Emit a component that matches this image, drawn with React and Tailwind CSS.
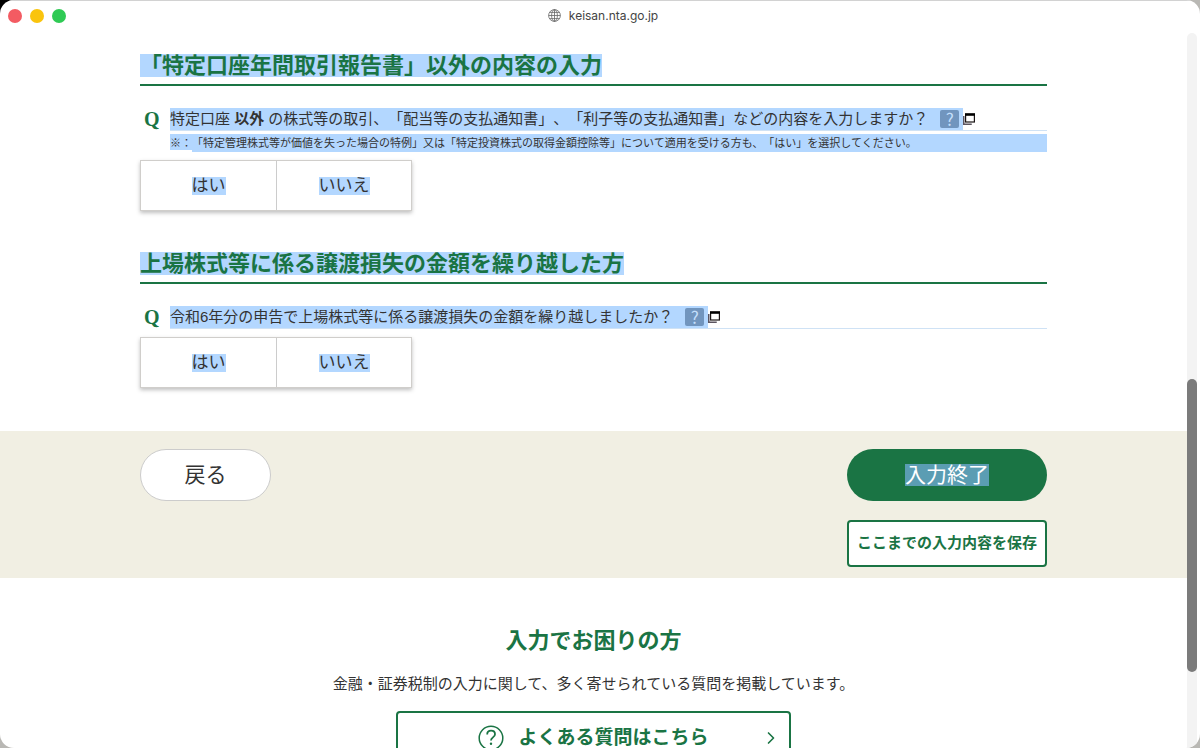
import { ChevronRight } from 'lucide-react';

function GlobeIcon() {
  return (
    <svg className="size-[13px]" viewBox="0 0 13 13" fill="none" stroke="#666" strokeWidth="0.8" aria-hidden="true">
      <circle cx="6.5" cy="6.5" r="5.9" />
      <ellipse cx="6.5" cy="6.5" rx="2.9" ry="5.9" />
      <path d="M6.5 0.6v11.8M0.6 6.5h11.8M1.6 3.4h9.8M1.6 9.6h9.8" />
    </svg>
  );
}

function WindowIcon() {
  return (
    <svg className="size-3" viewBox="0 0 12 12" role="img" aria-label="別ウィンドウで開く">
      <path d="M0.75 3v8.25h8" fill="none" stroke="#5b5560" strokeWidth="1.5" />
      <rect x="2.6" y="1" width="8.8" height="8" fill="#fff" stroke="#1a1414" strokeWidth="1.2" />
      <path d="M2 0.4h10v2.4H2z" fill="#000" />
    </svg>
  );
}

function QuestionIcon() {
  return (
    <svg className="size-[26px]" viewBox="0 0 26 26" fill="none" stroke="#1a7444" aria-hidden="true">
      <circle cx="13" cy="13" r="11.8" strokeWidth="1.5" />
      <path d="M9.2 9.4c0-2.3 1.6-3.7 3.9-3.7s3.9 1.4 3.9 3.5c0 3.2-4 3.2-4 6.2" strokeWidth="1.8" />
      <circle cx="13" cy="18.8" r="1.2" fill="#1a7444" stroke="none" />
    </svg>
  );
}

function TitleBar() {
  return (
    <header className="flex h-[30px] shrink-0 items-center border-t border-[#d2d2d2] pl-2">
      <div className="flex gap-2">
        <button aria-label="閉じる" className="size-[14px] rounded-full bg-[#f35b62]" />
        <button aria-label="しまう" className="size-[14px] rounded-full bg-[#fac40d]" />
        <button aria-label="拡大" className="size-[14px] rounded-full bg-[#2fca54]" />
      </div>
      <div className="flex flex-1 items-center justify-center gap-2 pr-[60px] font-[Inter] text-xs text-[#444]">
        <GlobeIcon />
        <span>keisan.nta.go.jp</span>
      </div>
    </header>
  );
}

function SectionHeading(props) {
  return (
    <h2 className="flex border-b-2 border-[#1a7444] pb-[7px] text-[22px] leading-[23px] font-bold text-[#1a7444]">
      <span className="bg-[#b3d7ff]">{props.children}</span>
    </h2>
  );
}

function Question(props) {
  return (
    <div className="mt-[22px] flex">
      <span className="w-[30px] pl-1 font-['Liberation_Serif'] text-xl leading-[22px] font-bold text-[#1a7444]">
        Q
      </span>
      <div className="flex-1">
        <div className="flex h-[23px] items-center border-b border-[#cfe2f5] text-[15px] leading-[22px]">
          <p id={props.id} className="bg-[#b3d7ff] pr-3 whitespace-pre">
            {props.children}
          </p>
          <a href="#help" className="flex items-center" aria-label="ヘルプ">
            <span className="flex h-[22px] items-center bg-[#b3d7ff] pr-1">
              <span className="h-[18px] w-[19px] rounded-xs bg-[#7195be] text-center font-['Noto_Sans_CJK_JP',sans-serif] text-[17px] leading-[18px] text-[#c3dffc]">
                ?
              </span>
            </span>
            <WindowIcon />
          </a>
        </div>
        {props.note && (
          <p className="mt-[3px] flex text-[11px] leading-[18px]">
            <span className="h-4 bg-[#b3d7ff]">※：</span>
            <span className="flex-1 bg-[#b3d7ff]">{props.note}</span>
          </p>
        )}
      </div>
    </div>
  );
}

function Answers(props) {
  return (
    <div
      role="group"
      aria-labelledby={props.labelledBy}
      className="mt-2 flex w-fit border border-[#d0cecb] bg-white shadow-[0_2px_4px_rgba(0,0,0,0.25)]"
    >
      <button className="h-[49px] w-[135px] text-[17px]">
        <span className="inline-block bg-[#b3d7ff] leading-[18px]">はい</span>
      </button>
      <button className="h-[49px] w-[135px] border-l border-[#ccc] text-[17px]">
        <span className="inline-block bg-[#b3d7ff] leading-[18px]">いいえ</span>
      </button>
    </div>
  );
}

function App() {
  return (
    <div className="h-screen overflow-hidden bg-[radial-gradient(circle_at_top_left,#000_12px,#b9b8b4_40px)] font-['Liberation_Sans','Noto_Sans_CJK_JP',sans-serif] text-[#333] [text-spacing-trim:space-all]">
      <div className="flex h-full flex-col overflow-hidden rounded-[14px] bg-white">
        <TitleBar />

        <div className="flex min-h-0 flex-1">
          <main className="min-w-0 flex-1 overflow-hidden">
            <div className="mx-auto max-w-[907px] pt-6 pb-[43px]">
              <section>
                <SectionHeading>「特定口座年間取引報告書」以外の内容の入力</SectionHeading>
                <Question
                  id="other-input"
                  note="「特定管理株式等が価値を失った場合の特例」又は「特定投資株式の取得金額控除等」について適用を受ける方も、「はい」を選択してください。"
                >
                  特定口座 <b>以外</b> の株式等の取引、「配当等の支払通知書」、「利子等の支払通知書」などの内容を入力しますか？
                </Question>
                <Answers labelledBy="other-input" />
              </section>

              <section className="mt-[41px]">
                <SectionHeading>上場株式等に係る譲渡損失の金額を繰り越した方</SectionHeading>
                <Question id="carry-over">
                  令和6年分の申告で上場株式等に係る譲渡損失の金額を繰り越しましたか？
                </Question>
                <Answers labelledBy="carry-over" />
              </section>
            </div>

            <div className="bg-[#f1efe3] pt-[18px] pb-[11px]">
              <div className="mx-auto flex max-w-[907px] items-start justify-between">
                <button className="h-[52px] w-[131px] rounded-full border border-[#ccc] bg-white text-[21px]">
                  戻る
                </button>
                <div className="flex w-[200px] flex-col gap-[19px]">
                  <button className="h-[52px] rounded-full bg-[#1a7444] text-[21px] text-white">
                    <span className="inline-block bg-[#5b9db3] leading-[22px]">入力終了</span>
                  </button>
                  <button className="h-[47px] rounded-sm border-2 border-[#1a7444] bg-white text-[15px] font-bold text-[#1a7444]">
                    ここまでの入力内容を保存
                  </button>
                </div>
              </div>
            </div>

            <section className="flex flex-col items-center pt-[51px]">
              <h2 className="text-[22px] leading-[23px] font-bold text-[#1a7444]">入力でお困りの方</h2>
              <p className="mt-[21px] text-[15px] leading-[22px]">
                金融・証券税制の入力に関して、多く寄せられている質問を掲載しています。
              </p>
              <a
                href="#faq"
                className="relative mt-4 flex h-[54px] w-[395px] items-center justify-center gap-[14px] rounded-sm border-2 border-[#1a7444] text-[19px] font-bold text-[#1a7444]"
              >
                <QuestionIcon />
                よくある質問はこちら
                <ChevronRight className="absolute right-2 size-5" strokeWidth={2} />
              </a>
            </section>
          </main>

          {/* scrollbar */}
          <div className="mt-[3px] mr-[3px] w-[10px] rounded-t-full bg-[#f3f3f3] pt-[346px]">
            <div className="h-[293px] rounded-full bg-[#7b7b7b]" />
          </div>
        </div>
      </div>
    </div>
  );
}

export default App;
